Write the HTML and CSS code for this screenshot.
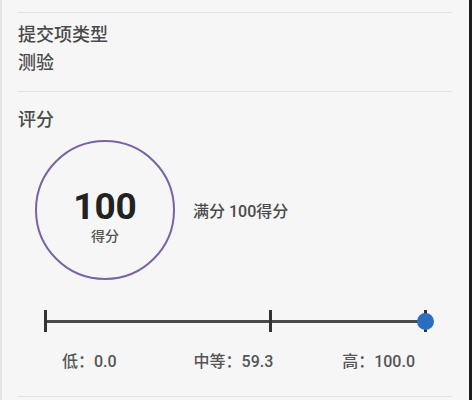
FILE: index.html
```
<!DOCTYPE html>
<html lang="zh-CN">

<head>
  <meta charset="UTF-8" />
  <title>提交详情</title>
  <link rel="stylesheet" href="styles.css">
</head>

<body>
  <div class="panel">
    <!-- 提交项类型 -->
    <div class="field type">
      <h5>提交项类型</h5>
      <p>测验</p>
    </div>

    <!-- 评分 -->
    <div class="field score">
      <h5>评分</h5>
      <div class="summary">
        <div class="ring">
          <span class="num">100</span>
          <span class="unit">得分</span>
        </div>
        <span class="total">满分 100得分</span>
      </div>

      <div class="scale">
        <div class="track">
          <span class="tick" style="left: 0%"></span>
          <span class="tick" style="left: 59.3%"></span>
          <span class="tick" style="left: 100%"></span>
          <span class="dot" style="left: 100%"></span>
        </div>
        <div class="marks">
          <span>低：0.0</span>
          <span>中等：59.3</span>
          <span>高：100.0</span>
        </div>
      </div>
    </div>

    <div class="field"></div>
  </div>
</body>

</html>
```

FILE: styles.css
```
body {
  margin: 0;
  padding: 0;
  background-color: #f6f6f6;
  font-family: "Roboto", "Noto Sans CJK SC", sans-serif;
  font-weight: 500;
  color: #4a4a4a;
}

.panel {
  height: 400px;
  box-sizing: border-box;
  padding: 12px 17px 0 16px;
  border-left: 2px solid #e4e4e4;
  border-right: 3px solid #1f1f1f;
  overflow: hidden;
}

.field {
  border-top: 1px solid #e3e3e3;
}

.field h5 {
  margin: 0;
  font-size: 18px;
  font-weight: 500;
  line-height: 24px;
}

.field p {
  margin: 0;
  font-size: 18px;
  line-height: 24px;
}

.type {
  padding: 10px 0 16px;
}

.type h5 {
  margin-bottom: 4px;
}

.score {
  padding-top: 16px;
  padding-bottom: 24px;
}

.summary {
  display: flex;
  align-items: center;
  margin-top: 8px;
  padding-left: 17px;
}

.ring {
  width: 140px;
  height: 140px;
  box-sizing: border-box;
  padding-top: 12px;
  border: 2px solid #7b62a4;
  border-radius: 50%;
  display: flex;
  flex-direction: column;
  align-items: center;
  justify-content: center;
}

.ring .num {
  font-size: 37px;
  font-weight: bold;
  line-height: 40px;
  color: #222;
}

.ring .unit {
  font-size: 14px;
  line-height: 18px;
  color: #555;
}

.total {
  margin-left: 18px;
  font-size: 16px;
}

.scale {
  margin: 30px 27px 0;
}

.track {
  position: relative;
  height: 22px;
}

.track::before {
  content: "";
  position: absolute;
  left: 0;
  right: 0;
  top: 10px;
  height: 3px;
  background-color: #4a4a4a;
}

.tick {
  position: absolute;
  top: 0;
  width: 3px;
  height: 22px;
  margin-left: -1px;
  background-color: #333;
}

.dot {
  position: absolute;
  top: 3px;
  width: 17px;
  height: 17px;
  margin-left: -8px;
  border-radius: 50%;
  background-color: #2b6dbf;
}

.marks {
  display: flex;
  justify-content: space-between;
  margin-top: 20px;
  padding: 0 10px 0 17px;
  font-size: 16px;
  line-height: 20px;
  color: #555;
}

.marks span:nth-child(2) {
  margin-left: 8px;
}
```
